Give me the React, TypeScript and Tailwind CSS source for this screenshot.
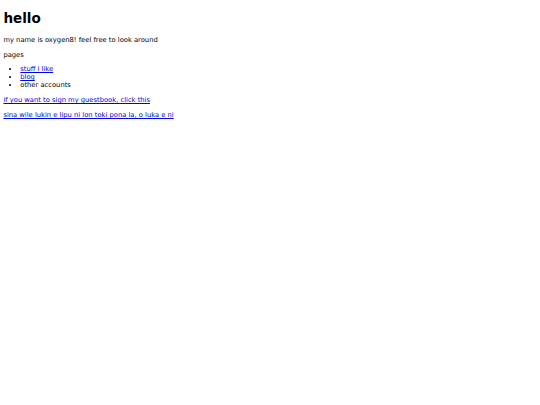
export default function App() {
  return (
    <div className="min-h-screen bg-white px-[3.4px] py-px font-['DejaVu_Sans',sans-serif] text-[6.75px] leading-[7.86px] text-black">
      <h1 className="mt-[8px] mb-[10px] text-[13.5px] font-bold leading-[18px]">hello</h1>
      <p className="my-[6.75px]">my name is oxygen8! feel free to look around</p>
      <p className="my-[6.75px]">pages</p>
      <ul className="my-[6.75px] list-disc pl-[16.9px]">
        <li>
          <a href="#" className="text-[#0000ee] underline">stuff i like</a>
        </li>
        <li>
          <a href="#" className="text-[#0000ee] underline">blog</a>
        </li>
        <li>other accounts</li>
      </ul>
      <p className="mt-[7.5px] mb-[6.75px]">
        <a href="#" className="text-[#0000ee] underline">if you want to sign my guestbook, click this</a>
      </p>
      <p className="my-[6.75px]">
        <a href="#" className="text-[#0000ee] underline">sina wile lukin e lipu ni lon toki pona la, o luka e ni</a>
      </p>
    </div>
  );
}
